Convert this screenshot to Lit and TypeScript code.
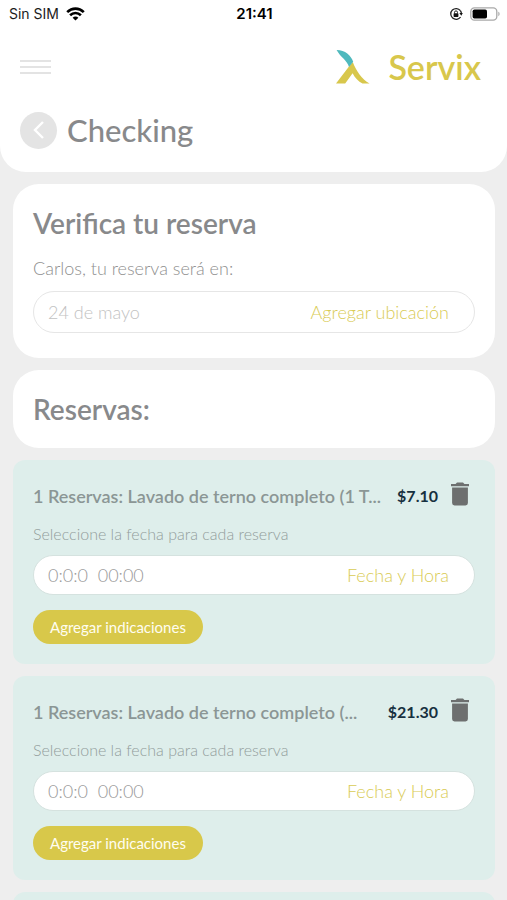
import { LitElement, html, css, nothing } from "lit";
import { customElement, property } from "lit/decorators.js";

@customElement("status-bar")
class StatusBar extends LitElement {
  static styles = css`
    :host {
      display: grid;
      grid-template-columns: 1fr auto 1fr;
      align-items: center;
      height: 28px;
      padding: 0 7px 0 9px;
      font: 400 14px/20px Inter, sans-serif;
      color: #1c1c1c;
    }
    .side {
      display: flex;
      align-items: center;
      gap: 7px;
    }
    .end {
      justify-content: flex-end;
    }
    .time {
      font-size: 15px;
      font-weight: 600;
      color: #000;
    }
    svg {
      display: block;
    }
  `;

  render() {
    return html`
      <div class="side">
        <span>Sin SIM</span>
        <svg width="19" height="14" viewBox="0 0 19 14" fill="none" stroke="#000" stroke-width="2.6">
          <path d="M1.2 5.2C6 .4 13 .4 17.8 5.2" />
          <path d="M4.1 8.3C7.2 5.3 11.8 5.3 14.9 8.3" />
          <path d="M9.5 13.6 6.6 10.7C8.2 9.1 10.8 9.1 12.4 10.7Z" fill="#000" stroke="none" />
        </svg>
      </div>
      <span class="time">21:41</span>
      <div class="side end">
        <svg width="14" height="14" viewBox="0 0 14 14" fill="none" stroke="#222" stroke-width="1.3">
          <path d="M11.4 3.6A5.4 5.4 0 1 0 11.6 10" />
          <path d="M11.4 3.6A5.4 5.4 0 0 1 12.4 7" />
          <path d="M10.4 6.1H13.8L12.3 8.8Z" fill="#111" stroke="none" />
          <rect x="4.6" y="6.3" width="4.8" height="3.6" rx=".6" fill="#111" stroke="none" />
          <path d="M5.5 6.6V5.4a1.5 1.5 0 0 1 3 0V6.6" stroke-width="1" />
        </svg>
        <svg width="30" height="14" viewBox="0 0 30 14">
          <rect x=".8" y=".8" width="26" height="12.4" rx="3.6" fill="#fff" stroke="#a9a9a9" stroke-width="1.3" />
          <rect x="2.6" y="2.4" width="14.4" height="9.2" rx="1.8" fill="#000" />
          <path d="M28.3 4.8C30 5.4 30 8.6 28.3 9.2Z" fill="#a9a9a9" />
        </svg>
      </div>
    `;
  }
}

@customElement("booking-card")
class BookingCard extends LitElement {
  @property() name = "";
  @property() price = "";

  static styles = css`
    :host {
      display: block;
      box-sizing: border-box;
      min-height: 204px;
      padding: 20px;
      border-radius: 12px;
      background: #deeeeb;
    }
    .head {
      display: flex;
      align-items: center;
      height: 32px;
    }
    h3 {
      flex: 1;
      min-width: 0;
      margin: 0;
      overflow: hidden;
      white-space: nowrap;
      font-size: 18px;
      line-height: 24px;
      font-weight: 600;
      color: #8b9695;
    }
    .price {
      margin-right: 12px;
      font-size: 16px;
      line-height: 24px;
      font-weight: 700;
      color: #17303f;
    }
    button {
      border: 0;
      font: inherit;
      cursor: pointer;
    }
    .trash {
      display: block;
      padding: 0;
      margin: 0 5px 4px 0;
      background: none;
    }
    .trash svg {
      display: block;
    }
    label {
      display: block;
      margin: 10px 0 9px;
      font-size: 16px;
      line-height: 24px;
      font-weight: 300;
      color: #929d9b;
    }
    .field {
      display: flex;
      align-items: center;
      box-sizing: border-box;
      height: 40px;
      padding: 0 25px 0 14px;
      border: 1px solid #d5e2df;
      border-radius: 20px;
      background: #fff;
      font-size: 18px;
    }
    input {
      flex: 1;
      min-width: 0;
      padding: 0;
      border: 0;
      outline: 0;
      background: none;
      font: inherit;
      font-weight: 300;
      color: #999;
      white-space: pre;
    }
    .pick {
      padding: 0;
      background: none;
      font-weight: 300;
      color: #d9cb55;
    }
    .notes {
      display: block;
      height: 34px;
      margin-top: 15px;
      padding: 0 17px;
      border-radius: 17px;
      background: #d8c84a;
      color: #fffdf0;
      font-size: 15px;
    }
  `;

  render() {
    if (!this.name) return nothing;
    return html`
      <div class="head">
        <h3>${this.name}</h3>
        <span class="price">${this.price}</span>
        <button class="trash" aria-label="Eliminar">
          <svg width="20" height="24" viewBox="0 0 20 24" fill="#6d6f6f">
            <path d="M1 2H5.6L7 .6H13L14.4 2H19V4.3H1Z" />
            <path d="M2.1 5.6H17.9V21A2.4 2.4 0 0 1 15.5 23.4H4.5A2.4 2.4 0 0 1 2.1 21Z" />
          </svg>
        </button>
      </div>
      <label for="when">Seleccione la fecha para cada reserva</label>
      <div class="field">
        <input id="when" type="text" readonly value="0:0:0  00:00" />
        <button class="pick">Fecha y Hora</button>
      </div>
      <button class="notes">Agregar indicaciones</button>
    `;
  }
}

@customElement("app-root")
class AppRoot extends LitElement {
  static styles = css`
    :host {
      display: flex;
      flex-direction: column;
      height: 100vh;
      overflow: hidden;
      background: #eee;
      font-family: Lato, sans-serif;
      color: #88898b;
    }
    header {
      flex: none;
      padding-bottom: 18px;
      border-radius: 0 0 26px 26px;
      background: #fff;
    }
    button {
      padding: 0;
      border: 0;
      background: none;
      font: inherit;
      cursor: pointer;
    }
    svg {
      display: block;
    }
    .brand-row {
      display: flex;
      align-items: center;
      justify-content: space-between;
      height: 78px;
      padding: 0 26px 0 20px;
    }
    .brand {
      display: flex;
      align-items: center;
      gap: 18px;
      font-size: 34px;
      line-height: 40px;
      font-weight: 600;
      color: #d8c74c;
    }
    .title-row {
      display: flex;
      align-items: center;
      gap: 10px;
      height: 48px;
      padding: 0 20px;
    }
    .back {
      display: grid;
      place-items: center;
      width: 37px;
      height: 37px;
      border-radius: 50%;
      background: #e4e4e4;
    }
    h1 {
      margin: 0;
      font-size: 31px;
      line-height: 40px;
      font-weight: 500;
    }
    main {
      flex: 1;
      min-height: 0;
      display: flex;
      flex-direction: column;
      gap: 12px;
      padding: 12px 12px 12px 13px;
      overflow-y: auto;
      scrollbar-width: none;
    }
    main > * {
      flex: none;
    }
    .panel {
      padding: 20px;
      border-radius: 26px;
      background: #fff;
    }
    h2 {
      margin: 0;
      font-size: 28px;
      line-height: 38px;
      font-weight: 600;
    }
    .panel label {
      display: block;
      margin: 14px 0 11px;
      font-size: 18px;
      line-height: 24px;
      font-weight: 300;
      color: #8f8f8f;
    }
    .field {
      display: flex;
      align-items: center;
      box-sizing: border-box;
      height: 42px;
      margin-bottom: 5px;
      padding: 0 25px 0 14px;
      border: 1px solid #e6e6e6;
      border-radius: 21px;
      font-size: 18px;
      font-weight: 300;
    }
    input {
      flex: 1;
      min-width: 0;
      padding: 0;
      border: 0;
      outline: 0;
      background: none;
      font: inherit;
    }
    input::placeholder {
      color: #c2c2c2;
    }
    .locate {
      color: #d9cb55;
    }
  `;

  bookings = [
    { name: "1 Reservas: Lavado de terno completo (1 T...", price: "$7.10" },
    { name: "1 Reservas: Lavado de terno completo (...", price: "$21.30" },
    { name: "", price: "" },
  ];

  render() {
    return html`
      <header>
        <status-bar></status-bar>
        <div class="brand-row">
          <button aria-label="Menú">
            <svg width="31" height="16" viewBox="0 0 31 16" stroke="#e3e3e3" stroke-width="2">
              <path d="M0 2H31M0 8H31M0 14H31" />
            </svg>
          </button>
          <div class="brand">
            <svg width="34" height="34" viewBox="0 0 34 34">
              <path d="M0 33.6 12.6 17 16.8 12C20 20.5 25.5 29 33.6 33.6H26.5C22.4 31.4 18.8 27.6 16.6 23.2L9.2 33.6Z" fill="#d8c74c" />
              <path d="M.6 0C9.4.4 14.8 5 17.2 11.8L13 17C11.4 10.6 4.6 7.4 .6 0Z" fill="#4fb9bd" />
            </svg>
            <span>Servix</span>
          </div>
        </div>
        <div class="title-row">
          <button class="back" aria-label="Volver">
            <svg width="14" height="20" viewBox="0 0 14 20" fill="none" stroke="#fff" stroke-width="2.4">
              <path d="M11 2 3 10l8 8" />
            </svg>
          </button>
          <h1>Checking</h1>
        </div>
      </header>
      <main>
        <section class="panel">
          <h2>Verifica tu reserva</h2>
          <label for="place">Carlos, tu reserva será en:</label>
          <div class="field">
            <input id="place" type="text" placeholder="24 de mayo" />
            <button class="locate">Agregar ubicación</button>
          </div>
        </section>
        <section class="panel">
          <h2>Reservas:</h2>
        </section>
        ${this.bookings.map((b) => html`<booking-card .name=${b.name} .price=${b.price}></booking-card>`)}
      </main>
    `;
  }
}
